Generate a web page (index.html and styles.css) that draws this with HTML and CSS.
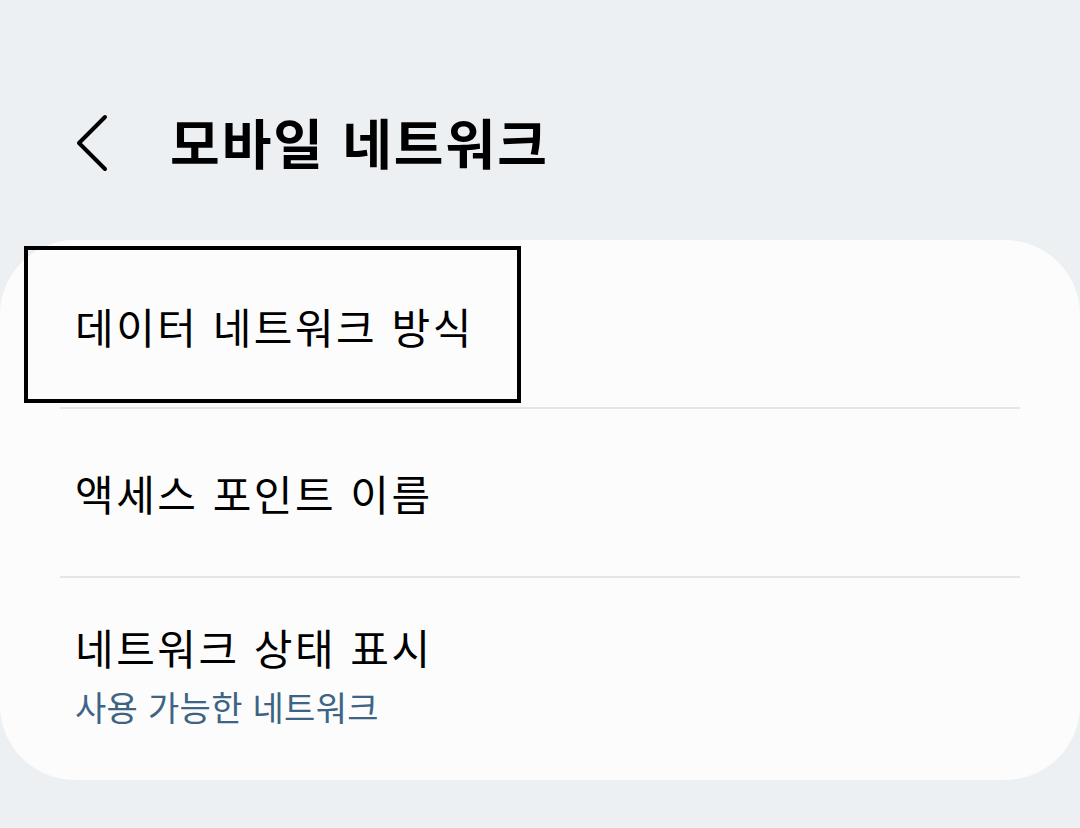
FILE: index.html
```html
<!DOCTYPE html>
<html lang="ko">
<head>
    <meta charset="UTF-8">
    <meta name="viewport" content="width=device-width, initial-scale=1.0">
    <title>모바일 네트워크</title>
    <link rel="stylesheet" href="styles.css">
</head>
<body>
    <div class="header">
        <button class="back-button" aria-label="뒤로">
            <svg width="40" height="60" viewBox="0 0 40 60">
                <polyline points="29,4 3,30 29,56" fill="none" stroke="#000" stroke-width="4" stroke-linecap="round" stroke-linejoin="round"/>
            </svg>
        </button>
        <h1 class="page-title">모바일 네트워크</h1>
    </div>

    <div class="settings-card">
        <div class="setting-row">
            <span class="setting-name focused">데이터 네트워크 방식</span>
        </div>
        <div class="divider"></div>
        <div class="setting-row">
            <span class="setting-name">액세스 포인트 이름</span>
        </div>
        <div class="divider"></div>
        <div class="setting-row tall">
            <span class="setting-name">네트워크 상태 표시</span>
            <span class="setting-value">사용 가능한 네트워크</span>
        </div>
    </div>
</body>
</html>
```

FILE: styles.css
```css
* {
    box-sizing: border-box;
    margin: 0;
    padding: 0;
}

body {
    font-family: "Noto Sans CJK KR", "Noto Sans", sans-serif;
    background-color: #edf0f3;
    width: 1080px;
    height: 828px;
    overflow: hidden;
}

.header {
    height: 240px;
    display: flex;
    align-items: flex-start;
    padding: 113px 0 0 76px;
}

.back-button {
    background: none;
    border: none;
    width: 40px;
    height: 60px;
    display: flex;
}

.page-title {
    font-size: 54px;
    font-weight: 700;
    letter-spacing: 2px;
    color: #000;
    margin-left: 54px;
    line-height: 60px;
    margin-top: -1px;
}

.settings-card {
    background-color: #fcfcfc;
    border-radius: 75px;
}

.setting-row {
    height: 167px;
    display: flex;
    flex-direction: column;
    justify-content: center;
    padding-left: 75px;
}

.setting-row.tall {
    height: 202px;
    padding-bottom: 8px;
}

.setting-name {
    font-size: 42px;
    letter-spacing: 2.5px;
    color: #000;
    line-height: 52px;
}

.setting-name.focused {
    align-self: flex-start;
    border: 4px solid #000;
    margin-left: -51px;
    padding: 50px 43px 47px 47px;
    margin-top: 2px;
}

.setting-value {
    font-size: 34px;
    letter-spacing: 0.3px;
    color: #3d6484;
    line-height: 44px;
    margin-top: 12px;
}

.divider {
    height: 2px;
    margin: 0 60px;
    background-color: #e5e5e5;
}
```
